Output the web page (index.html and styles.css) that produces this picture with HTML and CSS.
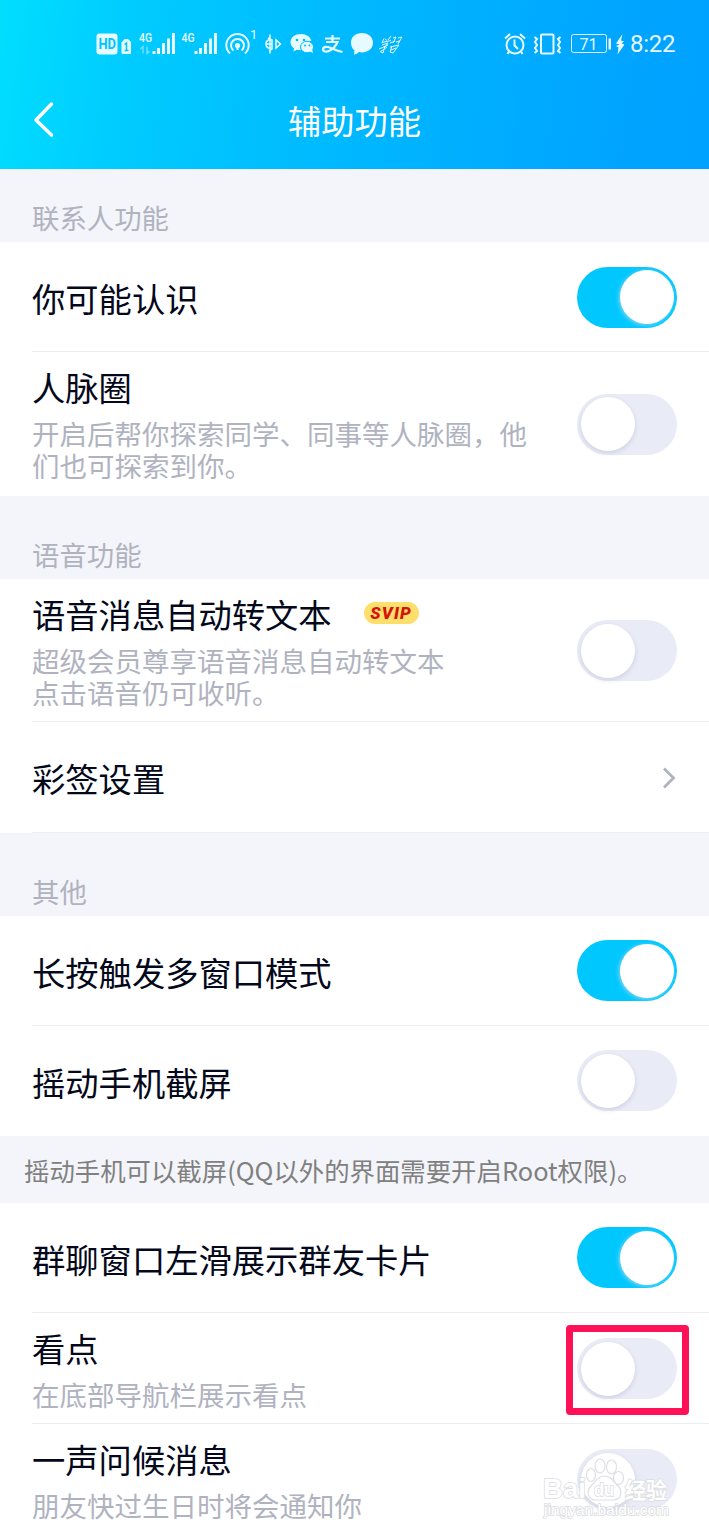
FILE: index.html
```html
<!DOCTYPE html>
<html lang="zh-CN">
<head>
<meta charset="utf-8">
<title>辅助功能</title>
<link rel="stylesheet" href="styles.css">
</head>
<body>
<div class="screen">
  <header class="header">
    <div class="status">
      <svg class="status-left" width="310" height="36" viewBox="94 26 310 36">
        <rect x="96.500" y="33.500" width="21" height="21" rx="3" fill="#e6faff"/>
        <text x="98.500" y="49" class="hd" textLength="17.500" lengthAdjust="spacingAndGlyphs">HD</text>
        <path d="M124.500 39h3.500l3 3v11q0 1-1 1h-7q-1.500 0-1.500-1.500v-10z" fill="#e6faff"/>
        <path d="M124.500 44.500l2-1.500v7.500M124.500 50.500h4" class="cut"/>
        <text x="139" y="42" class="net" textLength="13" lengthAdjust="spacingAndGlyphs">4G</text>
        <path d="M143 53.500v-7l-2.500 2.500M147 46.500v7l2.500-2.500" class="faint"/>
        <path d="M154 51v3M158.500 48v6M163.500 43v11M168.500 38.500v15.500M173.500 33v21" class="bars"/>
        <text x="181.500" y="42" class="net" textLength="13" lengthAdjust="spacingAndGlyphs">4G</text>
        <path d="M196 51v3M200.500 48v6M205.500 43v11M210.500 38.500v15.500M215.500 33v21" class="bars"/>
        <path d="M230 53.500a11.200 11.200 0 1 1 15 0" class="line"/>
        <path d="M233.500 50.500a6.500 6.500 0 1 1 8 0" class="line"/>
        <circle cx="237.500" cy="45.500" r="2.600" class="ink"/>
        <path d="M236.500 47h2v3h-2z" class="ink"/>
        <text x="250" y="39" class="one">1</text>
        <path d="M270 34.500v19M271 40h-2.500q-2.500 1-2.500 4t2.500 4h2.500M268 38l4 2v9l-3 2M266 44h6M276 40v8l4.500-4z" class="line thin"/>
        <path d="M301 34c-6 0-10.500 3.500-10.500 8.200 0 2.500 1.500 4.700 3.600 6.200l-.8 3 3.600-1.700 4 .5c-1.200-6 4-9.800 10.400-9.200C310.500 37 306.500 34 301 34z" class="ink"/>
        <ellipse cx="307" cy="47" rx="6.500" ry="5.800" class="ink ring"/>
        <path d="M309 51l4 2-1-4z" class="ink"/>
        <circle cx="297" cy="40" r="1.300" class="hole"/><circle cx="304" cy="40" r="1.300" class="hole"/>
        <circle cx="305" cy="45.500" r="1" class="hole"/><circle cx="309.500" cy="45.500" r="1" class="hole"/>
        <path d="M325 38.500h15M332.500 35v7M326 42h11.500q-2.500 6-8 8.700c-3 1.500-6.500 1-6.500-1.200 0-3.500 5-3 9-1q5 2.200 10.500 3.500" class="line alipay"/>
        <path d="M362 33c-6.500 0-11 4-11 9.400 0 3.700 1.300 6.200 3.400 7.800l-.4 4.500q3-.5 5-2.600 1.500.3 3 .3c6.500 0 11-4.200 11-9.600S368.500 33 362 33z" class="ink"/>
        <path d="M384 38.500l-2 4 9-2M385 39l2 1.500M391 36l-3 4M382 45l6-2-3 4M379 49l9-4M385 46l-2 7-2-1M380 52l7-5M393 38l3-1-3 6M390 43l5-2M398 38l4-1-4 7M396 42l4-1M390 47l9-2-6 8-3-1 2-6M391 50l5-2" class="line scribble"/>
      </svg>
      <div class="status-right">
        <svg width="122" height="36" viewBox="502 26 122 36">
          <circle cx="515" cy="45" r="8.500" class="line"/>
          <path d="M514.500 39.500v6l3.500 3.500M505 38.500l5-4.500M520 34l5 4.500M509 51.500l-1.500 2.500M521 51.500l1.500 2.500" class="line"/>
          <rect x="541" y="34.500" width="12.500" height="19" rx="1" class="line"/>
          <path d="M534.500 37l2.500 2-2 3 2 3-2 3 2 3-2.500 2M560.500 37l-2.500 2 2 3-2 3 2 3-2 3 2.500 2" class="line"/>
          <rect x="571.500" y="34.500" width="35" height="18" rx="2" class="line hair"/>
          <text x="579.500" y="50" class="battery" textLength="18" lengthAdjust="spacingAndGlyphs">71</text>
          <path d="M608.500 38.500h2.500v11h-2.500z" class="ink"/>
          <path d="M622.500 34l-6.500 9.500 3.500 1-3.500 1.500 2.500 1.500-1 7 7-10-3-1 2.500-2-3-1z" class="ink"/>
        </svg>
        <span class="clock">8:22</span>
      </div>
    </div>
    <div class="titlebar">
      <svg class="back" width="24" height="40" viewBox="0 0 24 40"><path d="M20.500 4L5 20 20.500 35"/></svg>
      <h1 class="heading">辅助功能</h1>
    </div>
  </header>

  <main>
    <h2 class="section first">联系人功能</h2>
    <div class="row single line-below"><span class="title">你可能认识</span><span class="toggle on"></span></div>
    <div class="row contacts">
      <div class="copy"><span class="title">人脉圈</span><p class="desc">开启后帮你探索同学、同事等人脉圈，他<br>们也可探索到你。</p></div>
      <span class="toggle"></span>
    </div>

    <h2 class="section">语音功能</h2>
    <div class="row voice line-below">
      <div class="copy"><div class="title-line"><span class="title">语音消息自动转文本</span><span class="svip">SVIP</span></div><p class="desc">超级会员尊享语音消息自动转文本<br>点击语音仍可收听。</p></div>
      <span class="toggle"></span>
    </div>
    <div class="row single tall line-below"><span class="title">彩签设置</span>
      <svg class="chevron" width="16" height="24" viewBox="0 0 16 24"><path d="M3 2.500L12.500 12 3 21.500"/></svg>
    </div>

    <h2 class="section">其他</h2>
    <div class="row single raised line-below"><span class="title">长按触发多窗口模式</span><span class="toggle on"></span></div>
    <div class="row single raised"><span class="title">摇动手机截屏</span><span class="toggle"></span></div>
    <p class="note">摇动手机可以截屏(QQ以外的界面需要开启Root权限)。</p>
    <div class="row single raised line-below"><span class="title">群聊窗口左滑展示群友卡片</span><span class="toggle on"></span></div>
    <div class="row short line-below">
      <div class="copy"><span class="title">看点</span><p class="desc">在底部导航栏展示看点</p></div>
      <span class="toggle-wrap"><span class="toggle"></span><span class="marker"></span></span>
    </div>
    <div class="row last">
      <div class="copy"><span class="title">一声问候消息</span><p class="desc">朋友快过生日时将会通知你</p></div>
      <span class="toggle"></span>
    </div>
  </main>

  <svg class="watermark" width="140" height="76" viewBox="538 1452 140 76">
    <text x="543" y="1498" class="wm-big" textLength="43" lengthAdjust="spacingAndGlyphs">Bai</text>
    <g class="paw">
      <ellipse cx="591" cy="1475" rx="4.500" ry="6.500"/>
      <ellipse cx="600" cy="1466" rx="5" ry="7"/>
      <ellipse cx="611.500" cy="1467" rx="5" ry="7"/>
      <ellipse cx="618.500" cy="1478" rx="5" ry="6.500"/>
      <path d="M604 1476c-6 0-8 5-12 9-6 5-5 15 4 15h17c9 0 10-10 4-15-4-4-6-9-13-9z"/>
    </g>
    <text x="594" y="1496" class="wm-du" textLength="20" lengthAdjust="spacingAndGlyphs">du</text>
    <text x="625" y="1498" class="wm-cn" textLength="42" lengthAdjust="spacingAndGlyphs">经验</text>
    <text x="544" y="1515" class="wm-url" textLength="125" lengthAdjust="spacingAndGlyphs">jingyan.baidu.com</text>
  </svg>
</div>
</body>
</html>
```
FILE: styles.css
```css
* { box-sizing: border-box; }
body { margin: 0; background: #fff; font-family: "Noto Sans CJK SC", sans-serif; }
h1, h2, p { margin: 0; font-weight: 400; }
.screen { position: relative; width: 709px; height: 1536px; overflow: hidden; }

.header { height: 169px; background: linear-gradient(98deg, #00deff 0%, #00ccff 18%, #00beff 40%, #00b0ff 64%, #00a4ff 88%, #00a2ff 100%); }
.status { height: 72px; padding: 26px 33px 0 94px; display: flex; justify-content: space-between; }
.status-right { display: flex; gap: 6px; }
.clock { font: 24px/37px Roboto, sans-serif; color: #e6f7ff; width: 46px; white-space: nowrap; letter-spacing: -.3px; }
.ink { fill: #e6faff; }
.hole { fill: #00beff; }
.ring { stroke: #00bcff; stroke-width: 1; }
.line { fill: none; stroke: #e6faff; stroke-width: 2; }
.thin { stroke-width: 1.500; }
.hair { stroke-width: 1; }
.alipay { stroke-width: 2.200; }
.scribble { stroke-width: 1; }
.bars { fill: none; stroke: #e6faff; stroke-width: 3; }
.faint { fill: none; stroke: #7fe0ff; stroke-width: 1.300; }
.cut { fill: none; stroke: #00c4ff; stroke-width: 1.500; }
.hd { font: 700 14px Roboto, sans-serif; fill: #00c4ff; }
.net { font: 500 12px Roboto, sans-serif; fill: #e6faff; }
.one { font: 13px Roboto, sans-serif; fill: #e6faff; }
.battery { font: 400 17px Roboto, sans-serif; fill: #e6faff; }

.titlebar { height: 97px; padding: 0 31px; display: grid; grid-template-columns: 24px 1fr 24px; }
.back { margin-top: 28px; }
.back path { fill: none; stroke: #fff; stroke-width: 3.500; stroke-linecap: round; stroke-linejoin: round; }
.heading { color: #fff; font-size: 33.300px; line-height: 48px; padding-top: 24px; text-align: center; }

.section { height: 83px; padding: 39px 32px 0; background: #f4f5fa; color: #b0b3bf; font-size: 27.400px; line-height: 38px; }
.section.first { height: 73px; padding-top: 29px; }
.row { display: flex; align-items: center; justify-content: space-between; padding: 0 32px; background: #fff; }
.single { height: 110px; }
.single .title { padding-top: 1px; }
.tall { height: 111px; }
.raised { padding-bottom: 1px; }
.raised .title { padding-top: 2px; }
.contacts { height: 144px; }
.voice { height: 143px; }
.short { height: 111px; }
.last { height: 112px; padding-bottom: 1px; }
.line-below { background: linear-gradient(#ebedf2, #ebedf2) 32px 100% / 100% 1px no-repeat #fff; }
.title { display: block; font-size: 33.300px; line-height: 42px; color: #03081a; white-space: nowrap; }
.copy { align-self: flex-start; padding-top: 14px; }
.title-line { display: flex; align-items: center; gap: 32px; }
.desc { margin-top: 9px; font-size: 27.500px; line-height: 32px; color: #b0b3bf; white-space: nowrap; }
.note { height: 67px; padding: 15px 24px 0; background: #f4f5fa; color: #808080; font-size: 25.400px; line-height: 38px; white-space: nowrap; }

.toggle { display: block; flex: none; width: 100px; height: 61px; padding: 3.500px; border-radius: 31px; background: #e9ecf6; }
.toggle::before { content: ""; display: block; width: 54px; height: 54px; border-radius: 50%; background: #fff; box-shadow: 0 2px 5px rgba(90, 100, 150, .2); }
.toggle.on { background: #00c8ff; }
.toggle.on::before { margin-left: 39.500px; box-shadow: -1px 1px 4px rgba(200, 220, 235, .7); }
.toggle-wrap { position: relative; }
.marker { position: absolute; left: -11px; top: -13px; width: 123px; height: 90px; border: 7px solid #ff1158; border-radius: 4px; }
.svip { width: 55px; height: 22px; margin-top: -3px; border-radius: 11px; background: #ffdf6b; color: #d2140a; font: italic 900 17px/22px Roboto, sans-serif; letter-spacing: 1.200px; text-align: center; }
.chevron path { fill: none; stroke: #b0b3bf; stroke-width: 2.800; }

.watermark { position: absolute; left: 538px; top: 1452px; }
.watermark text { fill: #fff; stroke: #dcdde1; stroke-width: 1.600; paint-order: stroke; }
.paw { fill: #fff; stroke: #dedfe3; stroke-width: 1.200; }
.wm-big { font: 700 28px "Liberation Sans", sans-serif; }
.wm-du { font: 700 18px "Liberation Sans", sans-serif; }
.wm-cn { font: 700 22px "Noto Sans CJK SC", sans-serif; }
.wm-url { font: 15px "Liberation Sans", sans-serif; }
```
